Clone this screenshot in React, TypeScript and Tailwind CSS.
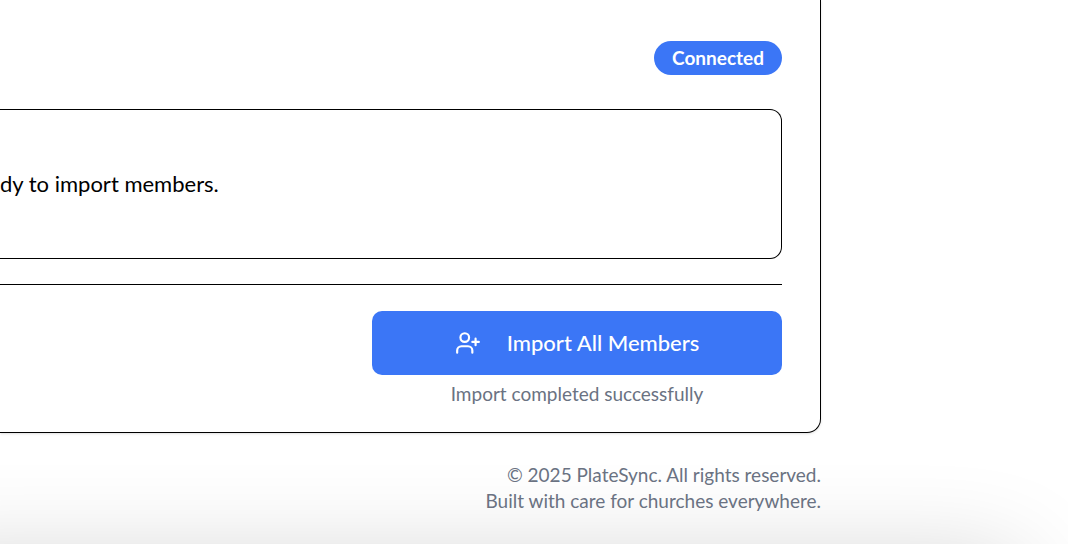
import { UserPlus } from "lucide-react";

export default function App() {
  return (
    <div className="relative isolate min-h-screen overflow-hidden bg-white pr-[247px] font-['Lato',sans-serif] text-black">
      <div
        aria-hidden="true"
        className="absolute -left-24 right-12 top-full -z-10 mt-4 h-40 shadow-[0_0_100px_0_rgba(0,0,0,0.19)]"
      />
      <main className="rounded-br-[14px] border-b border-r border-black bg-white pb-[25px] pr-[38px] pt-[41px] shadow-sm">
        <div className="flex justify-end">
          <span className="rounded-full bg-[#3b76f6] px-[18px] py-1 text-[19px] font-bold leading-[26px] text-white">
            Connected
          </span>
        </div>

        <section className="mt-[34px] flex h-[150px] items-center rounded-r-xl border-y border-r border-black">
          <p className="text-[22px] leading-8">dy to import members.</p>
        </section>

        <div className="mt-[25px] flex justify-end border-t border-black pt-[26px]">
          <div className="flex w-[410px] flex-col items-center">
            <button
              type="button"
              className="flex h-16 w-full items-center justify-center gap-[26px] rounded-[10px] bg-[#3b76f6] text-[22px] font-medium leading-8 text-white"
            >
              <UserPlus size={26} aria-hidden="true" />
              Import All Members
            </button>
            <p className="mt-[6px] text-[19px] leading-[26px] text-gray-500">
              Import completed successfully
            </p>
          </div>
        </div>
      </main>

      <footer className="pb-8 pt-[29px] text-right text-[19px] leading-[26px] text-gray-500">
        <p>© 2025 PlateSync. All rights reserved.</p>
        <p>Built with care for churches everywhere.</p>
      </footer>
    </div>
  );
}
